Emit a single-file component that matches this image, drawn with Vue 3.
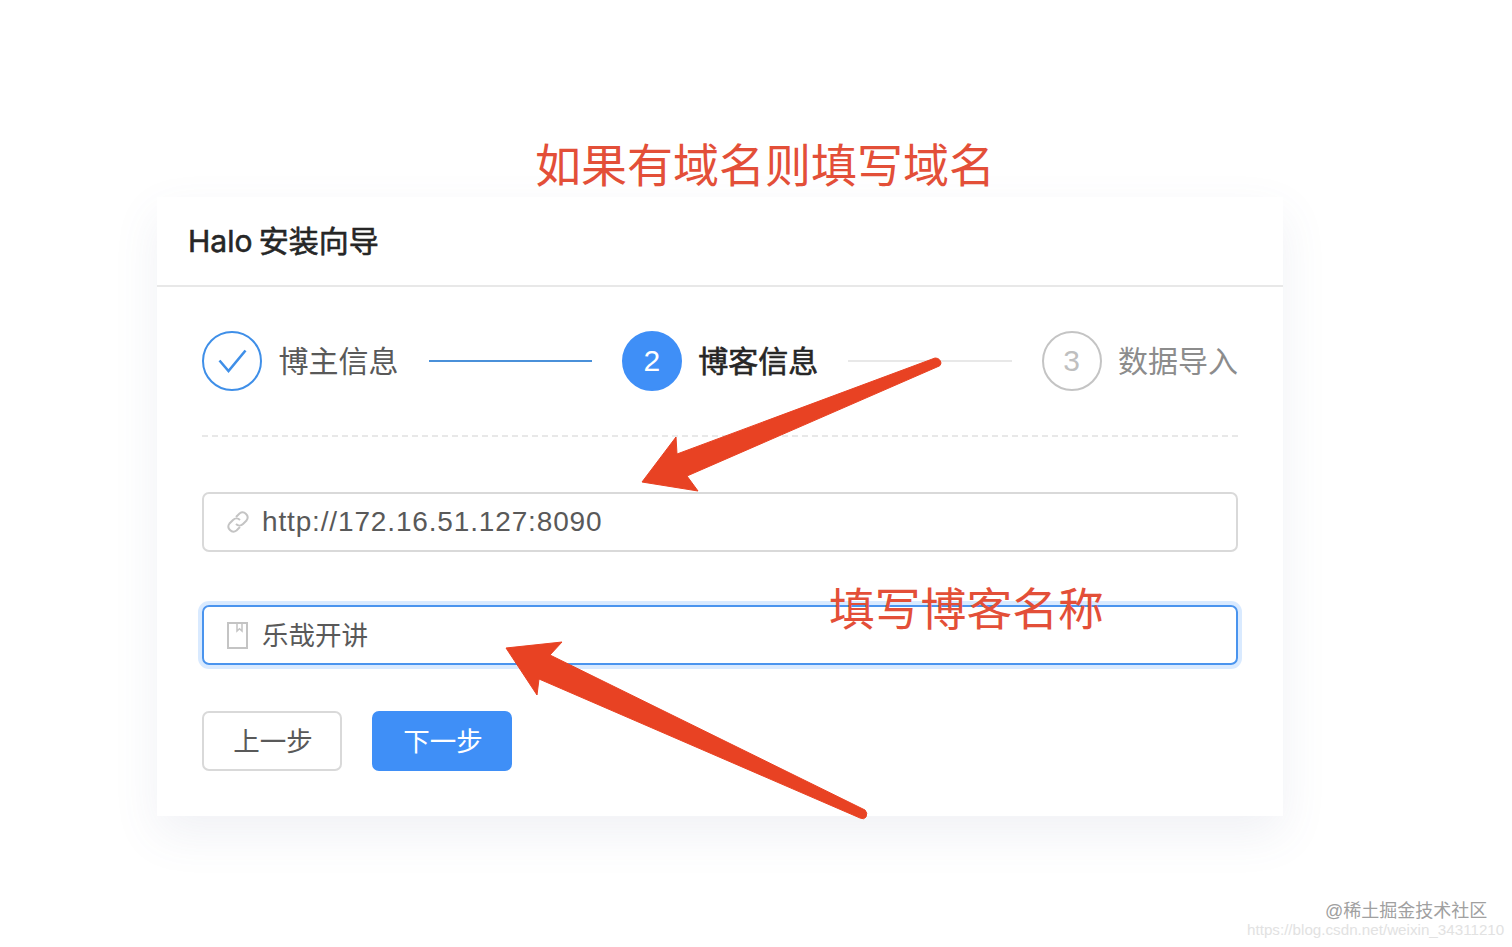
<script setup>
// wizard steps for the install page
const steps = [
  { label: '博主信息', state: 'done' },
  { label: '博客信息', state: 'active', num: 2 },
  { label: '数据导入', state: 'todo', num: 3 },
]
</script>

<template>
  <div class="page">
    <div class="card">
      <div class="card-head">Halo 安装向导</div>
      <div class="card-body">
        <div class="steps">
          <template v-for="(step, i) in steps" :key="step.label">
            <div class="step" :class="step.state">
              <span class="step-icon">
                <svg v-if="step.state === 'done'" width="60" height="60" viewBox="0 0 60 60">
                  <path d="M17.5 29.5 L26.5 40 L43.5 19.5" fill="none" stroke="#3f8fe8" stroke-width="2.6" />
                </svg>
                <template v-else>{{ step.num }}</template>
              </span>
              <span class="step-label">{{ step.label }}</span>
            </div>
            <div v-if="i < steps.length - 1" class="step-line" :class="{ finished: step.state === 'done' }"></div>
          </template>
        </div>

        <div class="field">
          <svg class="field-icon" width="26" height="26" viewBox="0 0 26 26" fill="none" stroke="#c4c4c4" stroke-width="2">
            <path d="M11 8 L14.5 4.5 a5 5 0 0 1 7 7 L18 15 a5 5 0 0 1 -7 0" />
            <path d="M15 18 L11.5 21.5 a5 5 0 0 1 -7 -7 L8 11 a5 5 0 0 1 7 0" />
          </svg>
          <span class="field-text url">http://172.16.51.127:8090</span>
        </div>

        <div class="field focused">
          <svg class="field-icon" width="26" height="28" viewBox="0 0 26 28" fill="none" stroke="#c4c4c4" stroke-width="2">
            <rect x="3" y="2" width="19" height="25" />
            <path d="M12 2 V10 L14.5 7.8 L17 10 V2" stroke-width="1.5" />
          </svg>
          <span class="field-text">乐哉开讲</span>
        </div>

        <div class="actions">
          <button class="btn">上一步</button>
          <button class="btn primary">下一步</button>
        </div>
      </div>
    </div>

    <!-- annotations drawn on top of the screenshot -->
    <div class="note note-top">如果有域名则填写域名</div>
    <div class="note note-name">填写博客名称</div>
    <svg class="arrows" width="1512" height="947" viewBox="0 0 1512 947">
      <path fill="#e84223" stroke="#e84223" stroke-linejoin="round" stroke-width="1"
        d="M642 482 L676 437 L677 454 L935 358 Q940 358 941 363 Q941 366 937 367 L687 476 L698 491 Z" />
      <path fill="#e84223" stroke="#e84223" stroke-linejoin="round" stroke-width="1"
        d="M506 648 L562 642 L550 655 L865 810 Q868 813 866 817 Q864 820 860 818 L539 679 L537 695 Z" />
    </svg>

    <div class="mark mark-main">@稀土掘金技术社区</div>
    <div class="mark mark-url">https://blog.csdn.net/weixin_34311210</div>
  </div>
</template>

<style>
html,
body {
  margin: 0;
  background: #fff;
}
</style>

<style scoped>
.page {
  position: relative;
  height: 947px;
  overflow: hidden;
  padding: 197px 229px 0 157px;
  box-sizing: border-box;
  background: #fff;
  font-family: "Liberation Sans", "Noto Sans CJK SC", sans-serif;
  color: #4a4a4a;
}

.card {
  height: 619px;
  background: #fff;
  box-shadow: 0 18px 44px rgba(90, 105, 140, 0.09);
}

.card-head {
  height: 90px;
  box-sizing: border-box;
  padding: 24px 31px 0;
  font-family: Inter, "Noto Sans CJK SC", sans-serif;
  font-size: 30px;
  line-height: 40px;
  word-spacing: -2px;
  color: #262626;
  -webkit-text-stroke: 0.6px #262626;
  border-bottom: 2px solid #e8e8e8;
}

.card-body {
  padding: 44px 45px 0;
}

/* Steps row */
.steps {
  display: flex;
  align-items: center;
  gap: 30px;
  padding-bottom: 44px;
  border-bottom: 2px dashed #e8e8e8;
  margin-bottom: 55px;
}
.step {
  display: flex;
  align-items: center;
  gap: 16.5px;
}
.step-icon {
  width: 60px;
  height: 60px;
  box-sizing: border-box;
  border-radius: 50%;
  display: flex;
  align-items: center;
  justify-content: center;
  font-size: 30px;
  border: 2px solid #c4c4c4;
  color: #bfbfbf;
}
.step-icon svg {
  flex: none;
  margin: -2px;
}
.step-label {
  padding-top: 2px;
  font-size: 30px;
  line-height: 40px;
  white-space: nowrap;
  color: #8c8c8c;
}
.step.done .step-icon {
  border-color: #3f8fe8;
}
.step.done .step-label {
  color: #595959;
}
.step.active .step-icon {
  background: #3f8ff7;
  border-color: #3f8ff7;
  color: #fff;
}
.step.active .step-label {
  color: #262626;
  -webkit-text-stroke: 0.6px #262626;
}
.step-line {
  flex: 1;
  height: 2px;
  background: #e8e8e8;
}
.step-line.finished {
  background: #4a90d9;
}

/* Inputs */
.field {
  height: 60px;
  box-sizing: border-box;
  display: flex;
  align-items: center;
  gap: 11px;
  padding-left: 21px;
  border: 2px solid #d9d9d9;
  border-radius: 7px;
  margin-bottom: 53px;
}
.field.focused {
  border-color: #4a94ee;
  box-shadow: 0 0 0 4px rgba(64, 150, 255, 0.2);
  margin-bottom: 46px;
}
.field-icon {
  flex: none;
}
.field-text {
  padding-top: 2px;
  font-size: 26.5px;
  line-height: 36px;
  color: #595959;
}
.field-text.url {
  padding-top: 0;
  font-size: 28px;
  letter-spacing: 0.85px;
}

/* Buttons */
.actions {
  display: flex;
  gap: 30px;
}
.btn {
  width: 140px;
  height: 60px;
  padding: 0 0 4px 2px;
  border: 2px solid #d9d9d9;
  border-radius: 7px;
  background: #fff;
  font-family: inherit;
  font-size: 26.5px;
  color: #595959;
}
.btn.primary {
  background: #3f8ff7;
  border-color: #3f8ff7;
  color: #fff;
}

/* Annotations */
.note {
  position: absolute;
  font-size: 46px;
  line-height: 60px;
  color: #e34f38;
  white-space: nowrap;
}
.note-top {
  left: 535px;
  top: 136px;
}
.note-name {
  left: 829px;
  top: 581px;
  font-size: 45.8px;
}
.arrows {
  position: absolute;
  left: 0;
  top: 0;
  pointer-events: none;
}

/* Watermarks */
.mark {
  position: absolute;
  white-space: nowrap;
}
.mark-main {
  left: 1325px;
  top: 899px;
  font-size: 18px;
  line-height: 24px;
  color: #a0a0a0;
}
.mark-url {
  left: 1247px;
  top: 920px;
  font-size: 15.2px;
  line-height: 20px;
  color: #e2e2e2;
}
</style>
